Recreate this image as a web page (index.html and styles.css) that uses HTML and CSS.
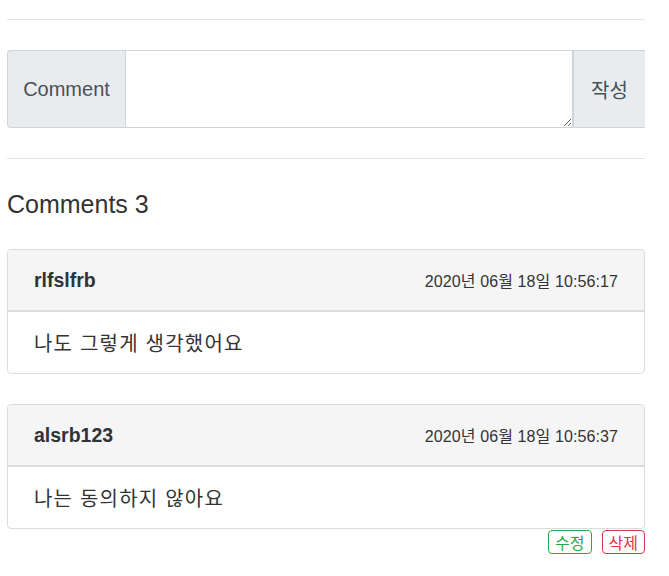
FILE: index.html
```html
<!DOCTYPE html>
<html lang="ko">
<head>
<meta charset="utf-8">
<link rel="stylesheet" href="styles.css">
</head>
<body>
<div class="container">
  <hr class="rule rule-top">
  <form class="input-group">
    <span class="addon">Comment</span>
    <textarea class="field"></textarea>
    <button type="button" class="submit">작성</button>
  </form>
  <hr class="rule rule-mid">
  <h2 class="title">Comments 3</h2>
  <div class="card">
    <div class="card-head">
      <strong class="user">rlfslfrb</strong>
      <span class="date">2020년 06월 18일 10:56:17</span>
    </div>
    <div class="card-body">나도 그렇게 생각했어요</div>
  </div>
  <div class="card card-second">
    <div class="card-head">
      <strong class="user">alsrb123</strong>
      <span class="date">2020년 06월 18일 10:56:37</span>
    </div>
    <div class="card-body">나는 동의하지 않아요</div>
  </div>
  <div class="actions">
    <button type="button" class="btn btn-edit">수정</button>
    <button type="button" class="btn btn-del">삭제</button>
  </div>
</div>
</body>
</html>
```
FILE: styles.css
```css
* { box-sizing: border-box; }
html, body { margin: 0; padding: 0; background: #fff; }
body {
  font-family: "Liberation Sans", Arial, "Noto Sans CJK KR", sans-serif;
  color: #333;
}
.container {
  width: 638px;
  margin-left: 7px;
}
.rule {
  border: 0;
  border-top: 1px solid #e5e5e5;
  margin: 0;
}
.rule-top { margin-top: 19px; }
.input-group {
  display: flex;
  height: 78px;
  margin-top: 30px;
}
.addon {
  display: flex;
  align-items: center;
  justify-content: center;
  width: 118px;
  background: #e9ecef;
  border: 1px solid #ced4da;
  border-right: 0;
  border-radius: 4px 0 0 4px;
  color: #495057;
  font-size: 20px;
}
.field {
  flex: 1;
  border: 1px solid #ced4da;
  margin: 0;
  padding: 6px 12px;
  resize: vertical;
  font: inherit;
}
.submit {
  width: 72px;
  background: #e9ecef;
  border: 1px solid #ced4da;
  border-left: 1px solid #ced4da;
  border-right: 0;
  color: #495057;
  font-family: "Liberation Sans", "Noto Sans CJK KR", sans-serif;
  font-size: 20px;
  padding: 0;
  margin: 0;
}
.rule-mid { margin-top: 30px; }
.title {
  margin: 29px 0 0;
  font-weight: 400;
  font-size: 25px;
  line-height: 32px;
  color: #333;
}
.card {
  margin-top: 29px;
  border: 1px solid #dcdcdc;
  border-radius: 4px;
  overflow: hidden;
}
.card-second { margin-top: 30px; }
.card-head {
  display: flex;
  justify-content: space-between;
  align-items: center;
  height: 62px;
  padding: 0 26px;
  background: #f5f5f5;
  border-bottom: 2px solid #dcdcdc;
}
.user {
  font-size: 19.5px;
  font-weight: 700;
  color: #2f3338;
}
.date {
  font-size: 16px;
  letter-spacing: 0.1px;
  color: #333;
}
.card-body {
  display: flex;
  align-items: center;
  height: 61px;
  padding: 0 26px;
  font-family: "Noto Sans CJK KR", "Liberation Sans", sans-serif;
  font-size: 20px;
  letter-spacing: 1.2px;
  color: #333;
}
.actions {
  display: flex;
  justify-content: flex-end;
  gap: 10px;
  margin-top: 1px;
}
.btn {
  height: 24px;
  padding: 0 6px;
  background: #fff;
  border-radius: 4px;
  font-family: "Noto Sans CJK KR", sans-serif;
  font-size: 16px;
  line-height: 20px;
}
.btn-edit { border: 1px solid #28a745; color: #28a745; }
.btn-del { border: 1px solid #dc3545; color: #dc3545; }
```
